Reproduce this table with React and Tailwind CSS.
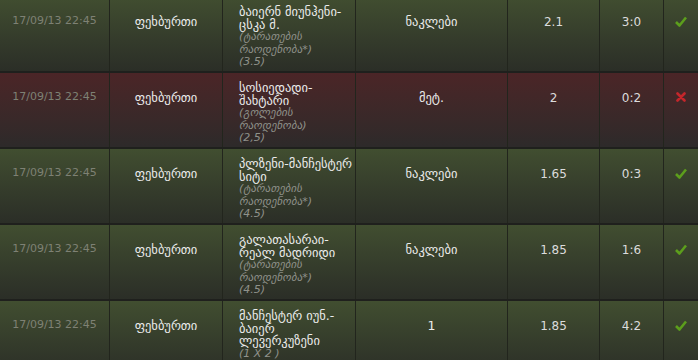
const rows = [
  {
    won: true,
    match: 'ბაიერნ მიუნჰენი-ცსკა მ.',
    note: '(ტარათების რაოდენობა*)',
    line: '(3.5)',
    bet: 'ნაკლები',
    odds: '2.1',
    score: '3:0',
  },
  {
    won: false,
    match: 'სოსიედადი-შახტარი',
    note: '(გოლების რაოდენობა)',
    line: '(2,5)',
    bet: 'მეტ.',
    odds: '2',
    score: '0:2',
  },
  {
    won: true,
    match: 'პლზენი-მანჩესტერ სიტი',
    note: '(ტარათების რაოდენობა*)',
    line: '(4.5)',
    bet: 'ნაკლები',
    odds: '1.65',
    score: '0:3',
  },
  {
    won: true,
    match: 'გალათასარაი-რეალ მადრიდი',
    note: '(ტარათების რაოდენობა*)',
    line: '(4.5)',
    bet: 'ნაკლები',
    odds: '1.85',
    score: '1:6',
  },
  {
    won: true,
    match: 'მანჩესტერ იუნ.-ბაიერ ლევერკუზენი',
    note: null,
    line: '(1 X 2 )',
    bet: '1',
    odds: '1.85',
    score: '4:2',
  },
]

function Check() {
  return (
    <svg width="12" height="11" viewBox="0 0 12 11">
      <path d="M1 6 L4.5 9.5 L11 1.5" fill="none" stroke="#5c9e1c" strokeWidth="2.6" strokeLinejoin="round" />
    </svg>
  )
}

function Cross() {
  return (
    <svg width="10" height="10" viewBox="0 0 10 10">
      <path d="M1.5 1.5 L8.5 8.5 M8.5 1.5 L1.5 8.5" stroke="#c4262b" strokeWidth="2.6" strokeLinecap="round" />
    </svg>
  )
}

export default function App() {
  return (
    <div className="w-[698px] h-[360px] overflow-hidden bg-[#262824] font-['DejaVu_Sans',sans-serif]">
      <div className="-mt-[3px]">
        {rows.map((r, i) => (
          <div
            key={i}
            className={
              'grid grid-cols-[110px_113px_133px_152px_92px_64px_34px] h-[76px] border-b-2 border-[#1f201d] ' +
              (r.won
                ? 'bg-gradient-to-b from-[#414e30] to-[#2b2e27]'
                : 'bg-gradient-to-b from-[#4b2527] to-[#2d2a2a]')
            }
          >
            <div className="border-r border-[#22251d] pt-[16px] text-center text-[11px] text-[#7e8174]">
              17/09/13 22:45
            </div>
            <div className="border-r border-[#22251d] pt-[16px] text-center text-[12.5px] text-[#ececec]">
              ფეხბურთი
            </div>
            <div className="border-r border-[#22251d] pl-4 pt-[9px] text-[12.5px] leading-[12.5px] text-[#ececec]">
              <div>{r.match}</div>
              {r.note && <div className="italic text-[11px] leading-[12.5px] text-[#8f918a]">{r.note}</div>}
              <div className="italic text-[11px] leading-[12.5px] text-[#8f918a]">{r.line}</div>
            </div>
            <div className="border-r border-[#22251d] pt-[16px] text-center text-[12.5px] text-[#ececec]">
              {r.bet}
            </div>
            <div className="border-r border-[#22251d] pt-[16px] text-center text-[12px] text-[#dcdcdc]">
              {r.odds}
            </div>
            <div className="border-r border-[#22251d] pt-[16px] text-center text-[12px] text-[#dcdcdc]">
              {r.score}
            </div>
            <div className="flex justify-center pt-[19px]">{r.won ? <Check /> : <Cross />}</div>
          </div>
        ))}
      </div>
    </div>
  )
}
